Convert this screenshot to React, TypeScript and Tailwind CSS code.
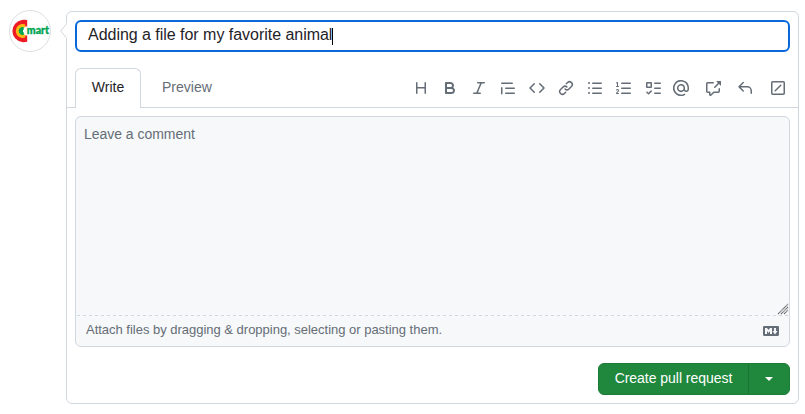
import React from "react";

const paths = {
  heading:
    "M3.75 2a.75.75 0 0 1 .75.75V7h7V2.75a.75.75 0 0 1 1.5 0v10.5a.75.75 0 0 1-1.5 0V8.5h-7v4.75a.75.75 0 0 1-1.5 0V2.75A.75.75 0 0 1 3.75 2Z",
  bold: "M4 2h4.5a3.501 3.501 0 0 1 2.852 5.53A3.499 3.499 0 0 1 9.5 14H4a1 1 0 0 1-1-1V3a1 1 0 0 1 1-1Zm1 7v3h4.5a1.5 1.5 0 0 0 0-3Zm3.5-2a1.5 1.5 0 0 0 0-3H5v3Z",
  italic:
    "M6 2.75A.75.75 0 0 1 6.75 2h6.5a.75.75 0 0 1 0 1.5h-2.505l-3.858 9H9.25a.75.75 0 0 1 0 1.5h-6.5a.75.75 0 0 1 0-1.5h2.505l3.858-9H6.75A.75.75 0 0 1 6 2.75Z",
  quote:
    "M1.75 2.5h10.5a.75.75 0 0 1 0 1.5H1.75a.75.75 0 0 1 0-1.5Zm4 5h8.5a.75.75 0 0 1 0 1.5h-8.5a.75.75 0 0 1 0-1.5Zm0 5h8.5a.75.75 0 0 1 0 1.5h-8.5a.75.75 0 0 1 0-1.5ZM2.5 7.75v6a.75.75 0 0 1-1.5 0v-6a.75.75 0 0 1 1.5 0Z",
  code: "m11.28 3.22 4.25 4.25a.75.75 0 0 1 0 1.06l-4.25 4.25a.749.749 0 0 1-1.275-.326.749.749 0 0 1 .215-.734L13.94 8l-3.72-3.72a.749.749 0 0 1 .326-1.275.749.749 0 0 1 .734.215Zm-6.56 0a.751.751 0 0 1 1.042.018.751.751 0 0 1 .018 1.042L2.06 8l3.72 3.72a.749.749 0 0 1-.326 1.275.749.749 0 0 1-.734-.215L.47 8.53a.75.75 0 0 1 0-1.06Z",
  link: "m7.775 3.275 1.25-1.25a3.5 3.5 0 1 1 4.95 4.95l-2.5 2.5a3.5 3.5 0 0 1-4.95 0 .751.751 0 0 1 .018-1.042.751.751 0 0 1 1.042-.018 1.998 1.998 0 0 0 2.83 0l2.5-2.5a2.002 2.002 0 0 0-2.83-2.83l-1.25 1.25a.751.751 0 0 1-1.042-.018.751.751 0 0 1-.018-1.042Zm-4.69 9.64a1.998 1.998 0 0 0 2.83 0l1.25-1.25a.751.751 0 0 1 1.042.018.751.751 0 0 1 .018 1.042l-1.25 1.25a3.5 3.5 0 1 1-4.95-4.95l2.5-2.5a3.5 3.5 0 0 1 4.95 0 .751.751 0 0 1-.018 1.042.751.751 0 0 1-1.042.018 1.998 1.998 0 0 0-2.83 0l-2.5 2.5a1.998 1.998 0 0 0 0 2.83Z",
  unordered:
    "M5.75 2.5h8.5a.75.75 0 0 1 0 1.5h-8.5a.75.75 0 0 1 0-1.5Zm0 5h8.5a.75.75 0 0 1 0 1.5h-8.5a.75.75 0 0 1 0-1.5Zm0 5h8.5a.75.75 0 0 1 0 1.5h-8.5a.75.75 0 0 1 0-1.5ZM2 14a1 1 0 1 1 0-2 1 1 0 0 1 0 2Zm1-6a1 1 0 1 1-2 0 1 1 0 0 1 2 0ZM2 4a1 1 0 1 1 0-2 1 1 0 0 1 0 2Z",
  ordered:
    "M5 3.25a.75.75 0 0 1 .75-.75h8.5a.75.75 0 0 1 0 1.5h-8.5A.75.75 0 0 1 5 3.25Zm0 5a.75.75 0 0 1 .75-.75h8.5a.75.75 0 0 1 0 1.5h-8.5A.75.75 0 0 1 5 8.25Zm0 5a.75.75 0 0 1 .75-.75h8.5a.75.75 0 0 1 0 1.5h-8.5a.75.75 0 0 1-.75-.75ZM.924 10.32a.5.5 0 0 1-.851-.525l.001-.001.001-.002.002-.004.007-.011c.097-.144.215-.273.348-.384.228-.19.588-.392 1.068-.392.468 0 .858.181 1.126.484.259.294.377.673.377 1.038 0 .987-.686 1.495-1.156 1.845l-.047.035c-.303.225-.522.4-.654.597h1.357a.5.5 0 0 1 0 1H.5a.5.5 0 0 1-.5-.5c0-1.005.692-1.52 1.167-1.875l.035-.025c.531-.396.8-.625.8-1.078a.57.57 0 0 0-.128-.376C1.806 10.068 1.695 10 1.5 10a.658.658 0 0 0-.429.163.835.835 0 0 0-.144.153ZM2.003 2.5V6h.503a.5.5 0 0 1 0 1H.5a.5.5 0 0 1 0-1h.503V3.308l-.28.14a.5.5 0 0 1-.446-.895l1.003-.5a.5.5 0 0 1 .723.447Z",
  tasklist:
    "M2 2h4a1 1 0 0 1 1 1v4a1 1 0 0 1-1 1H2a1 1 0 0 1-1-1V3a1 1 0 0 1 1-1Zm4.655 8.595a.75.75 0 0 1 0 1.06L4.03 14.28a.75.75 0 0 1-1.06 0l-1.5-1.5a.749.749 0 0 1 .326-1.275.749.749 0 0 1 .734.215l.97.97 2.095-2.095a.75.75 0 0 1 1.06 0ZM9.75 2.5h5.5a.75.75 0 0 1 0 1.5h-5.5a.75.75 0 0 1 0-1.5Zm0 5h5.5a.75.75 0 0 1 0 1.5h-5.5a.75.75 0 0 1 0-1.5Zm0 5h5.5a.75.75 0 0 1 0 1.5h-5.5a.75.75 0 0 1 0-1.5Zm-7.25-9v3h3v-3Z",
  mention:
    "M4.75 2.37a6.501 6.501 0 0 0 6.5 11.26.75.75 0 0 1 .75 1.298A7.999 7.999 0 0 1 .989 4.148 8 8 0 0 1 16 7.75v1.5a2.75 2.75 0 0 1-5.072 1.475 3.999 3.999 0 0 1-6.65-4.19A4 4 0 0 1 12 8v1.25a1.25 1.25 0 0 0 2.5 0V7.867a6.5 6.5 0 0 0-9.75-5.496ZM10.5 8a2.5 2.5 0 1 0-5 0 2.5 2.5 0 0 0 5 0Z",
  crossReference:
    "M2.75 3.5a.25.25 0 0 0-.25.25v7.5c0 .138.112.25.25.25h2a.75.75 0 0 1 .75.75v2.19l2.72-2.72a.749.749 0 0 1 .53-.22h4.5a.25.25 0 0 0 .25-.25v-2.5a.75.75 0 0 1 1.5 0v2.5A1.75 1.75 0 0 1 13.25 13H9.06l-2.573 2.573A1.458 1.458 0 0 1 4 14.543V13H2.75A1.75 1.75 0 0 1 1 11.25v-7.5C1 2.784 1.784 2 2.75 2h5.5a.75.75 0 0 1 0 1.5ZM16 1.25v4.146a.25.25 0 0 1-.427.177L14.03 4.03l-3.75 3.75a.749.749 0 0 1-1.275-.326.749.749 0 0 1 .215-.734l3.75-3.75-1.543-1.543A.25.25 0 0 1 11.604 1h4.146a.25.25 0 0 1 .25.25Z",
  reply:
    "M6.78 1.97a.75.75 0 0 1 0 1.06L3.81 6h6.44A4.75 4.75 0 0 1 15 10.75v2.5a.75.75 0 0 1-1.5 0v-2.5a3.25 3.25 0 0 0-3.25-3.25H3.81l2.97 2.97a.749.749 0 0 1-.326 1.275.749.749 0 0 1-.734-.215L1.47 7.28a.75.75 0 0 1 0-1.06l4.25-4.25a.75.75 0 0 1 1.06 0Z",
  slash:
    "M13.25 1c.966 0 1.75.784 1.75 1.75v10.5A1.75 1.75 0 0 1 13.25 15H2.75A1.75 1.75 0 0 1 1 13.25V2.75C1 1.784 1.784 1 2.75 1ZM2.75 2.5a.25.25 0 0 0-.25.25v10.5c0 .138.112.25.25.25h10.5a.25.25 0 0 0 .25-.25V2.75a.25.25 0 0 0-.25-.25Zm8.53 3.28-5.5 5.5a.75.75 0 0 1-1.06-1.06l5.5-5.5a.75.75 0 0 1 1.06 1.06Z",
  markdown:
    "M14.85 3c.63 0 1.15.52 1.14 1.15v7.7c0 .63-.51 1.15-1.15 1.15H1.15C.52 13 0 12.48 0 11.84V4.15C0 3.52.52 3 1.15 3ZM9 11V5H7L5.5 7 4 5H2v6h2V8l1.5 1.92L7 8v3Zm2.99.5L14.5 8H13V5h-2v3H9.5Z",
};

type IconName = keyof typeof paths;

function Icon({ name }: { name: IconName }) {
  return (
    <svg viewBox="0 0 16 16" className="block size-4 shrink-0 fill-[#656d76]" aria-hidden="true">
      <path d={paths[name]} />
    </svg>
  );
}

const formatting: IconName[] = ["heading", "bold", "italic", "quote", "code", "link", "unordered", "ordered", "tasklist"];
const references: IconName[] = ["mention", "crossReference", "reply"];

function Avatar() {
  return (
    <div className="mt-2.5 ml-[9px] size-[42px] shrink-0 overflow-hidden rounded-full border border-[#dddfe2] bg-white">
      <svg viewBox="0 0 40 40" className="block size-10">
        <path d="M17.2 9.3C15.5 8.8 13.6 8.7 12 9A11.1 11.1 0 0 0 12 31c1.6.3 3.500.2 5.200-.3V24.500H13V15.500h4.200Z" fill="#ed1c24" />
        <path d="M15.200 13.400a7 7 0 1 0 0 13.200V23.700l-3-1.200v-5l3-1.200Z" fill="#fdb913" />
        <path d="M13.800 16.300a3.900 3.900 0 1 0 0 7.400v-2.200a1.600 1.600 0 0 1 0-3Z" fill="#00a551" />
        <text
          x="16.8"
          y="23.2"
          textLength="22.2"
          lengthAdjust="spacingAndGlyphs"
          fontSize="10.5"
          strokeWidth="0.35"
          className="fill-[#00a551] stroke-[#00a551] font-['Lato','Liberation_Sans',sans-serif] font-black"
        >
          mart
        </text>
      </svg>
    </div>
  );
}

export default function App() {
  return (
    <div className="flex h-[414px] w-[805px] overflow-hidden bg-white font-['Liberation_Sans',Arial,sans-serif] text-sm text-[#1f2328]">
      <Avatar />
      <div className="relative mt-[11px] ml-[15px] h-[393px] w-[733px] rounded-md border border-[#d0d7de]">
        <svg viewBox="0 0 8 16" className="absolute top-[11px] -left-[7px] h-4 w-2">
          <path d="M7 0 .7 8 7 16h1V0Z" fill="#fff" />
          <path d="M6.500 1 .7 8l5.800 7" fill="none" stroke="#d0d7de" />
        </svg>

        <div className="mx-2 mt-2 flex h-8 items-center rounded-md border-2 border-[#0969da] px-[11px] pb-[3px] text-base">
          <span className="tracking-[-0.03px]">Adding a file for my favorite animal</span>
          <span className="mt-[3px] h-[17px] w-px bg-black" />
        </div>

        <div className="mt-4 flex h-10 border-b border-[#d0d7de] pl-2">
          <div className="-mb-px flex h-10 w-[66px] items-center justify-center rounded-t-md border border-b-0 border-[#d0d7de] bg-white pb-1">
            Write
          </div>
          <div className="flex items-center pb-0.5 pl-[21px] text-[#656d76]">Preview</div>
          <div className="ml-auto flex items-center pr-3">
            <div className="flex gap-[13px]">
              {formatting.map((name) => (
                <Icon key={name} name={name} />
              ))}
            </div>
            <div className="ml-3 flex gap-4">
              {references.map((name) => (
                <Icon key={name} name={name} />
              ))}
            </div>
            <div className="ml-[17px]">
              <Icon name="slash" />
            </div>
          </div>
        </div>

        <div className="mx-2 mt-2 flex h-[231px] flex-col rounded-md border border-[#d0d7de] bg-[#f6f8fa] text-[#656d76]">
          <div className="flex flex-1 justify-between pt-[7px] pl-2">
            <span className="tracking-[-0.03px]">Leave a comment</span>
            <svg viewBox="0 0 12 12" className="size-3 self-end">
              <path d="M1 11 11 1M4 11l7-7M7 11l4-4" stroke="#686c70" strokeWidth="1.1" strokeDasharray="1.4 .3" />
            </svg>
          </div>
          <svg className="block h-px w-full">
            <path d="M1 .5H713" stroke="#d0d7de" strokeDasharray="3 3" />
          </svg>
          <div className="flex h-[30px] items-center justify-between pr-2.5 pl-2.5 text-[13px]">
            <span className="pb-0.5 tracking-[-0.015px]">Attach files by dragging &amp; dropping, selecting or pasting them.</span>
            <Icon name="markdown" />
          </div>
        </div>

        <div className="mt-4 mr-2 ml-auto flex h-8 w-48 overflow-hidden rounded-md border border-[#1c7c37] bg-[#1f883d] text-white">
          <div className="flex w-[150px] items-center justify-center border-r border-[#1a7433] pb-0.5 tracking-[-0.03px]">Create pull request</div>
          <div className="flex flex-1 items-center justify-center">
            <svg viewBox="0 0 8 4" className="h-1 w-2 fill-white">
              <path d="M0 0h8L4 4Z" />
            </svg>
          </div>
        </div>
      </div>
    </div>
  );
}
